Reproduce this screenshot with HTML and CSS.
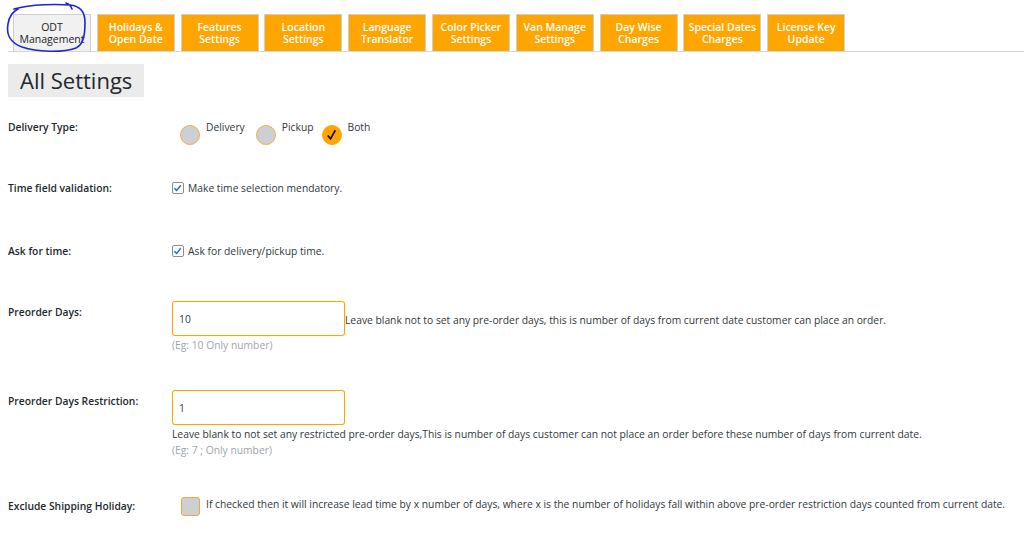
FILE: index.html
```html
<!DOCTYPE html>
<html>
<head>
<meta charset="utf-8">
<link rel="stylesheet" href="styles.css">
</head>
<body>
<div class="page">
  <nav class="tabs">
    <div class="tab tab-active">ODT<br>Management</div>
    <div class="tab">Holidays &amp;<br>Open Date</div>
    <div class="tab">Features<br>Settings</div>
    <div class="tab">Location<br>Settings</div>
    <div class="tab">Language<br>Translator</div>
    <div class="tab">Color Picker<br>Settings</div>
    <div class="tab">Van Manage<br>Settings</div>
    <div class="tab">Day Wise<br>Charges</div>
    <div class="tab">Special Dates<br>Charges</div>
    <div class="tab">License Key<br>Update</div>
  </nav>
  <svg class="annot" width="95" height="60" viewBox="0 0 95 60">
    <path d="M64 3 C67 4 69 6 70 9 M12 9 C30 4 55 4 68 5 C78 6 83 12 83 22 C83 34 82 44 74 48 C60 53 35 52 20 47 C9 43 4 35 6 24 C7 17 10 12 16 9" fill="none" stroke="#2323d6" stroke-width="1.6" stroke-linecap="round"/>
  </svg>

  <h1 class="title">All Settings</h1>

  <div class="form">
    <div class="row r1">
      <div class="label">Delivery Type:</div>
      <div class="field radios">
        <label class="radio"><span class="dot"></span><span class="rtext">Delivery</span></label>
        <label class="radio"><span class="dot"></span><span class="rtext tight">Pickup</span></label>
        <label class="radio"><span class="dot dot-on"><svg width="20" height="20" viewBox="0 0 20 20"><path d="M6 10.5 L9 14 L14 5" fill="none" stroke="#111" stroke-width="1.8"/></svg></span><span class="rtext">Both</span></label>
      </div>
    </div>

    <div class="row r2">
      <div class="label">Time field validation:</div>
      <div class="field check-line">
        <span class="cb"><svg width="12" height="12" viewBox="0 0 12 12"><path d="M2.5 6.2 L5 8.6 L9.6 3" fill="none" stroke="#2271b1" stroke-width="1.6"/></svg></span>
        <span>Make time selection mendatory.</span>
      </div>
    </div>

    <div class="row r3">
      <div class="label">Ask for time:</div>
      <div class="field check-line">
        <span class="cb"><svg width="12" height="12" viewBox="0 0 12 12"><path d="M2.5 6.2 L5 8.6 L9.6 3" fill="none" stroke="#2271b1" stroke-width="1.6"/></svg></span>
        <span>Ask for delivery/pickup time.</span>
      </div>
    </div>

    <div class="row r4">
      <div class="label">Preorder Days:</div>
      <div class="field">
        <div class="inline">
          <div class="input">10</div>
          <span class="desc">Leave blank not to set any pre-order days, this is number of days from current date customer can place an order.</span>
        </div>
        <div class="hint">(Eg: 10 Only number)</div>
      </div>
    </div>

    <div class="row r5">
      <div class="label">Preorder Days Restriction:</div>
      <div class="field">
        <div class="input">1</div>
        <div class="desc block">Leave blank to not set any restricted pre-order days,This is number of days customer can not place an order before these number of days from current date.</div>
        <div class="hint">(Eg: 7 ; Only number)</div>
      </div>
    </div>

    <div class="row r6">
      <div class="label">Exclude Shipping Holiday:</div>
      <div class="field check-line big">
        <span class="box"></span>
        <span class="desc">If checked then it will increase lead time by x number of days, where x is the number of holidays fall within above pre-order restriction days counted from current date.</span>
      </div>
    </div>
  </div>
</div>
</body>
</html>
```

FILE: styles.css
```css
* { box-sizing: border-box; }
html, body { margin: 0; padding: 0; background: #fff; }
body {
  font-family: "Open Sans", "Noto Sans", sans-serif;
  font-size: 10.3px;
  color: #23282d;
}
.page {
  position: relative;
  padding-left: 8px;
  width: 1024px;
  height: 545px;
  overflow: hidden;
}
.tabs {
  display: flex;
  gap: 5.8px;
  padding: 14px 0 0 5px;
  border-bottom: 1px solid #d6d6d6;
  height: 52px;
}
.tab {
  width: 78px;
  height: 37px;
  border: 1px solid #cfcfcf;
  border-bottom: none;
  background: #ffa500;
  color: #fff;
  font-size: 10.5px;
  line-height: 12.5px;
  text-align: center;
  display: flex;
  align-items: center;
  justify-content: center;
  font-weight: 600;
}
.tab-active {
  background: #f1f1f1;
  color: #222;
  font-weight: 400;
}
.annot {
  position: absolute;
  left: 2px;
  top: 0;
}
.title {
  display: inline-block;
  margin: 12px 0 0 0;
  height: 33px;
  padding: 0 12px;
  background: #ebebeb;
  font-size: 22px;
  font-weight: 400;
  line-height: 33px;
  color: #23282d;
}
.form {
  margin-top: 22px;
}
.row {
  display: flex;
  align-items: flex-start;
}
.label {
  width: 164px;
  flex: none;
  font-weight: 600;
  line-height: 16px;
  color: #23282d;
}
.field {
  line-height: 16px;
}
.r1 { height: 61px; }
.r2 { height: 63px; }
.r3 { height: 58px; }
.r4 { height: 89px; }
.r5 { height: 107px; }
.r6 { height: 40px; }
.r4 .label, .r5 .label { padding-top: 3px; }
.r6 .label { padding-top: 1px; }

.radios {
  display: flex;
  padding-left: 8px;
  gap: 6px;
}
.radio {
  display: flex;
  align-items: flex-start;
  gap: 6px;
}
.dot {
  width: 20px;
  height: 20px;
  border-radius: 50%;
  background: #ccd0d4;
  border: 1px solid #f0b040;
  margin-top: 6px;
  display: flex;
}
.dot-on {
  background: #ffa500;
  border-color: #ffa500;
}
.dot-on svg { margin: -1px 0 0 -1px; }
.rtext { color: #32373c; margin-right: 5px; }
.rtext.tight { margin-right: 2px; }

.check-line {
  display: flex;
  align-items: center;
  gap: 4px;
  color: #32373c;
}
.cb {
  width: 12px;
  height: 12px;
  border: 1px solid #8c8f94;
  border-radius: 2px;
  background: #fff;
  display: flex;
}
.cb svg { margin: -1px 0 0 -1px; }

.inline {
  display: flex;
  align-items: center;
}
.inline .desc { padding-top: 3px; }
.input {
  width: 173px;
  height: 35px;
  border: 1px solid #ffa500;
  border-radius: 3px;
  box-shadow: 0 0 1px rgba(255,165,0,0.6);
  padding-left: 6px;
  padding-top: 1px;
  line-height: 33px;
  color: #32373c;
  background: #fff;
}
.desc { color: #32373c; }
.desc.block { margin-top: 1px; }
.hint { color: #a0a5aa; margin-top: 0; }
.r4 .hint { margin-top: 1px; }

.check-line.big { align-items: flex-start; padding-left: 9px; gap: 6px; }
.box {
  width: 19px;
  height: 19px;
  background: #ccd0d4;
  border: 1px solid #f0a830;
  border-radius: 3px;
  flex: none;
}
.check-line.big .desc { margin-top: -1px; }
```
